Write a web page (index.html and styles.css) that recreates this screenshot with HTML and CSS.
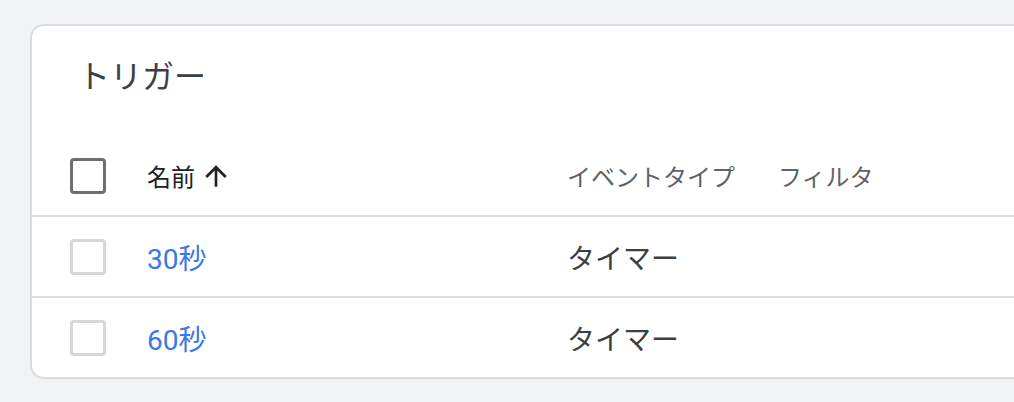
FILE: index.html
```html
<!DOCTYPE html>
<html lang="ja">

<head>
    <meta charset="UTF-8">
    <meta name="viewport" content="width=device-width, initial-scale=1.0">
    <title>トリガー</title>
    <link rel="stylesheet" href="styles.css">
</head>

<body>

    <div class="page">
        <div class="card">
            <div class="cardTitle">トリガー</div>

            <!-- 表头 -->
            <div class="row head">
                <div class="cell check"><span class="box dark"></span></div>
                <div class="cell name">
                    名前
                    <svg class="sort" viewBox="0 0 24 24">
                        <path d="M4 12l1.41 1.41L11 7.83V20h2V7.83l5.58 5.59L20 12l-8-8-8 8z"></path>
                    </svg>
                </div>
                <div class="cell">イベントタイプ</div>
                <div class="cell">フィルタ</div>
            </div>

            <div class="row item">
                <div class="cell check"><span class="box"></span></div>
                <div class="cell name"><a href="#">30秒</a></div>
                <div class="cell">タイマー</div>
                <div class="cell"></div>
            </div>

            <div class="row item">
                <div class="cell check"><span class="box"></span></div>
                <div class="cell name"><a href="#">60秒</a></div>
                <div class="cell">タイマー</div>
                <div class="cell"></div>
            </div>
        </div>
    </div>

</body>

</html>
```

FILE: styles.css
```css
body {
    margin: 0;
    background-color: #f1f3f4;
    font-family: Roboto, "Noto Sans CJK JP", sans-serif;
    overflow: hidden;
}

.page {
    padding: 24px 0 0 30px;
    height: 402px;
    box-sizing: border-box;
}

/* 卡片右侧被窗口截断 */
.card {
    background-color: #fff;
    border: 2px solid #dadce0;
    border-right: none;
    border-radius: 14px 0 0 14px;
}

.cardTitle {
    height: 110px;
    box-sizing: border-box;
    padding: 31px 0 0 46px;
    font-size: 32px;
    line-height: 40px;
    color: #3c4043;
}

.row {
    display: grid;
    grid-template-columns: 115px 420px 211px 1fr;
    align-items: center;
    height: 79px;
}

.row+.row {
    border-top: 2px solid #dadce0;
}

.head {
    font-size: 24px;
    color: #5f6368;
}

.head .name {
    color: #202124;
}

.item {
    font-size: 28px;
    color: #3c4043;
}

.cell {
    display: flex;
    align-items: center;
}

.check {
    padding-left: 38px;
}

.box {
    width: 36px;
    height: 36px;
    box-sizing: border-box;
    border: 3px solid #d6d6d6;
    border-radius: 4px;
}

.box.dark {
    border-color: #6f6f6f;
}

.sort {
    width: 32px;
    height: 32px;
    margin-left: 5px;
    fill: #202124;
}

.name a {
    color: #3b78e7;
    text-decoration: none;
}
```
